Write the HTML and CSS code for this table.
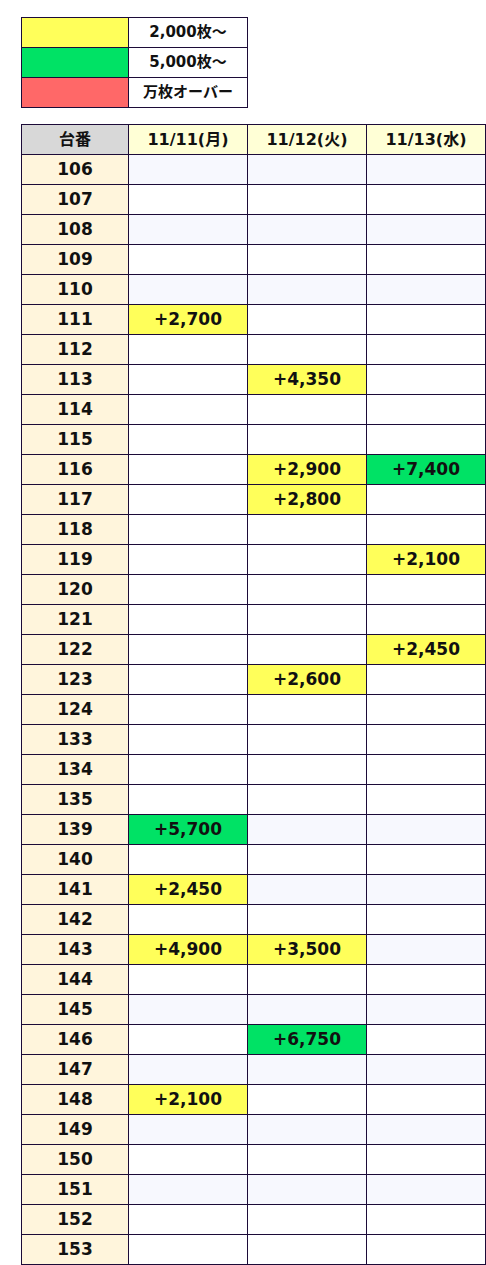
FILE: index.html
```html
<!DOCTYPE html>
<html lang="ja">
<head>
<meta charset="utf-8">
<title>台番別 差枚</title>
<link rel="stylesheet" href="styles.css">
</head>
<body>
<table class="legend">
  <tr><td class="sw y"></td><td class="lab">2,000枚〜</td></tr>
  <tr><td class="sw g"></td><td class="lab">5,000枚〜</td></tr>
  <tr><td class="sw r"></td><td class="lab">万枚オーバー</td></tr>
</table>

<table class="data">
  <colgroup><col class="c0"><col class="c1"><col class="c1"><col class="c1"></colgroup>
  <thead>
    <tr><th class="hn">台番</th><th class="hd">11/11(月)</th><th class="hd">11/12(火)</th><th class="hd">11/13(水)</th></tr>
  </thead>
  <tbody>
    <tr class="alt"><th>106</th><td></td><td></td><td></td></tr>
    <tr><th>107</th><td></td><td></td><td></td></tr>
    <tr class="alt"><th>108</th><td></td><td></td><td></td></tr>
    <tr><th>109</th><td></td><td></td><td></td></tr>
    <tr class="alt"><th>110</th><td></td><td></td><td></td></tr>
    <tr><th>111</th><td class="y">+2,700</td><td></td><td></td></tr>
    <tr><th>112</th><td></td><td></td><td></td></tr>
    <tr><th>113</th><td></td><td class="y">+4,350</td><td></td></tr>
    <tr><th>114</th><td></td><td></td><td></td></tr>
    <tr><th>115</th><td></td><td></td><td></td></tr>
    <tr><th>116</th><td></td><td class="y">+2,900</td><td class="g">+7,400</td></tr>
    <tr><th>117</th><td></td><td class="y">+2,800</td><td></td></tr>
    <tr><th>118</th><td></td><td></td><td></td></tr>
    <tr><th>119</th><td></td><td></td><td class="y">+2,100</td></tr>
    <tr><th>120</th><td></td><td></td><td></td></tr>
    <tr><th>121</th><td></td><td></td><td></td></tr>
    <tr><th>122</th><td></td><td></td><td class="y">+2,450</td></tr>
    <tr><th>123</th><td></td><td class="y">+2,600</td><td></td></tr>
    <tr><th>124</th><td></td><td></td><td></td></tr>
    <tr><th>133</th><td></td><td></td><td></td></tr>
    <tr><th>134</th><td></td><td></td><td></td></tr>
    <tr><th>135</th><td></td><td></td><td></td></tr>
    <tr class="alt"><th>139</th><td class="g">+5,700</td><td></td><td></td></tr>
    <tr><th>140</th><td></td><td></td><td></td></tr>
    <tr class="alt"><th>141</th><td class="y">+2,450</td><td></td><td></td></tr>
    <tr><th>142</th><td></td><td></td><td></td></tr>
    <tr class="alt"><th>143</th><td class="y">+4,900</td><td class="y">+3,500</td><td></td></tr>
    <tr><th>144</th><td></td><td></td><td></td></tr>
    <tr class="alt"><th>145</th><td></td><td></td><td></td></tr>
    <tr><th>146</th><td></td><td class="g">+6,750</td><td></td></tr>
    <tr class="alt"><th>147</th><td></td><td></td><td></td></tr>
    <tr><th>148</th><td class="y">+2,100</td><td></td><td></td></tr>
    <tr class="alt"><th>149</th><td></td><td></td><td></td></tr>
    <tr><th>150</th><td></td><td></td><td></td></tr>
    <tr class="alt"><th>151</th><td></td><td></td><td></td></tr>
    <tr><th>152</th><td></td><td></td><td></td></tr>
    <tr><th>153</th><td></td><td></td><td></td></tr>
  </tbody>
</table>
</body>
</html>
```

FILE: styles.css
```css
html, body {
  margin: 0;
  background: #ffffff;
}
body {
  padding: 17px 0 0 21px;
  font-family: "DejaVu Sans", "Noto Sans CJK JP", sans-serif;
  font-weight: bold;
  font-size: 17px;
  color: #111111;
}
table {
  border-collapse: collapse;
  table-layout: fixed;
}
td, th {
  border: 1px solid #1c0b38;
  padding: 0;
  height: 29px;
  text-align: center;
  vertical-align: middle;
  font-weight: bold;
  line-height: 1;
}
.legend {
  width: 227px;
}
.legend .sw { width: 106px; }
.legend .lab {
  background: #ffffff;
  font-size: 15px;
}
.y { background: #ffff5a; }
.g { background: #00e265; }
.r { background: #ff6868; }

.data {
  margin-top: 16px;
  width: 465px;
}
.data .c0 { width: 107px; }
.data .c1 { width: 119px; }
.data thead th {
  font-size: 16px;
}
.data .hn { background: #d8d8d8; }
.data .hd { background: #ffffd6; }
.data tbody th { background: #fff5dc; }
.data tbody td { background: #ffffff; }
.data tbody tr.alt td { background: #f7f8fe; }
.data tbody tr td.y { background: #ffff5a; }
.data tbody tr td.g { background: #00e265; }
```
